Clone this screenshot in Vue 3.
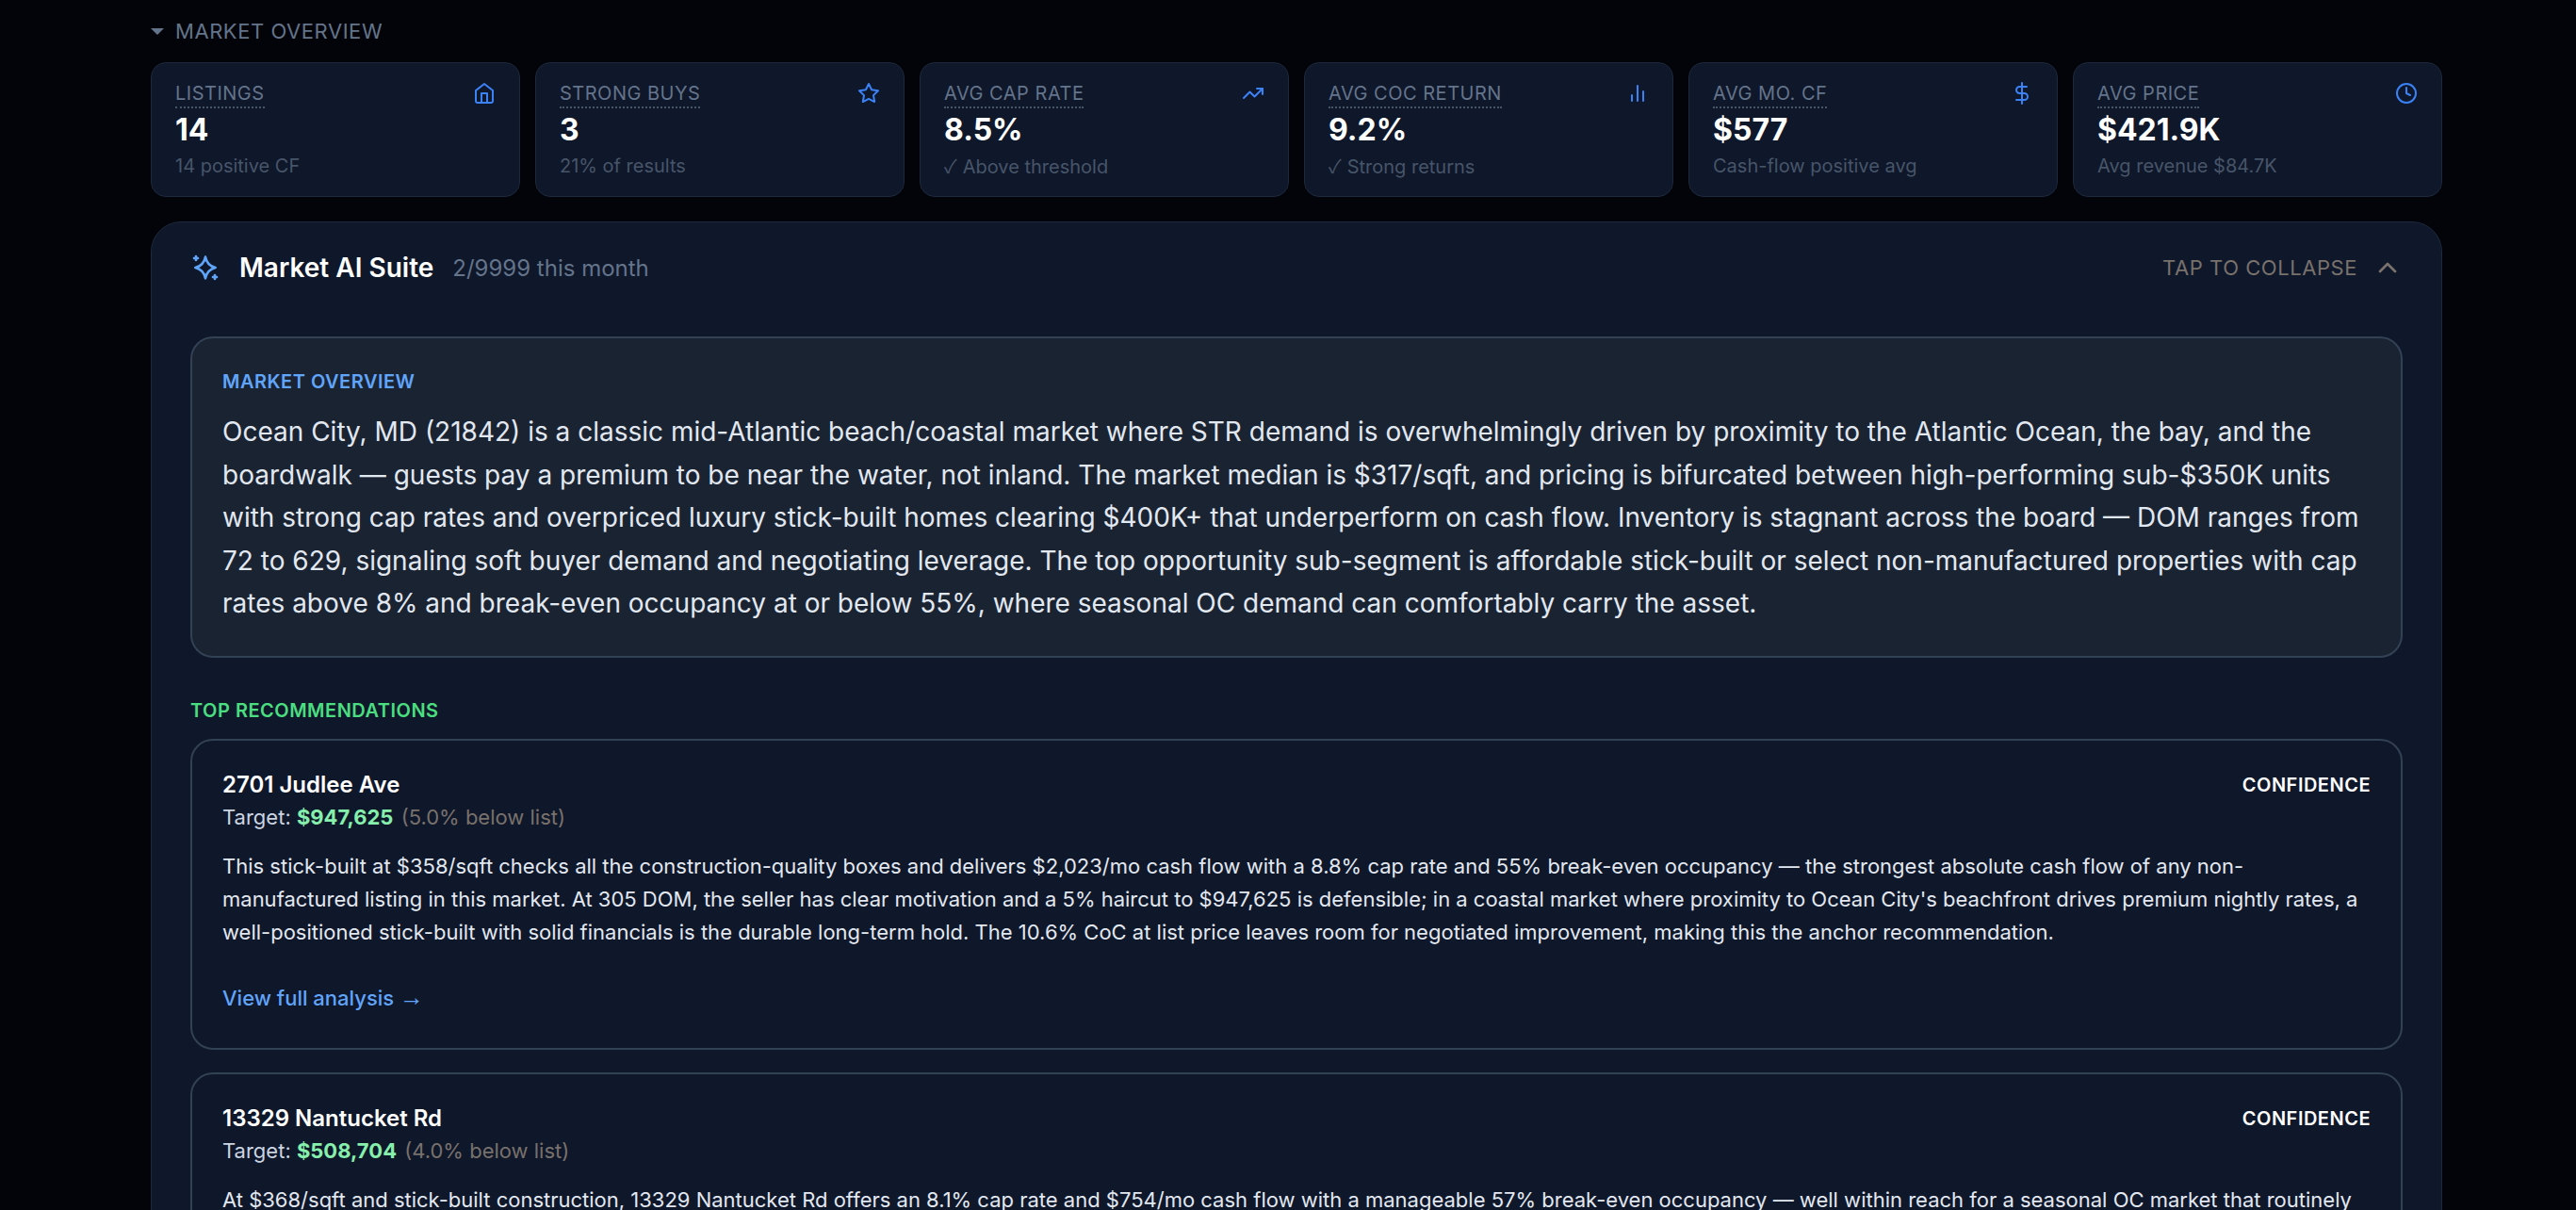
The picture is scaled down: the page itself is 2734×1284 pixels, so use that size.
<template>
  <div class="page">
    <div class="wrap">
      <div class="section-head">
        <span class="caret"></span>
        <span>MARKET OVERVIEW</span>
      </div>

      <!-- stat cards -->
      <div class="stats">
        <div v-for="s in stats" :key="s.label" class="stat">
          <div class="stat__top">
            <span class="stat__label">{{ s.label }}</span>
            <svg class="stat__icon" width="24" height="24" viewBox="0 0 24 24" fill="none" stroke="#3b82f6" stroke-width="2" stroke-linecap="round" stroke-linejoin="round">
              <path v-for="d in s.icon" :key="d" :d="d" />
            </svg>
          </div>
          <div class="stat__value">{{ s.value }}</div>
          <div class="stat__sub"><span v-if="s.check" class="stat__check">✓</span>{{ s.sub }}</div>
        </div>
      </div>

      <!-- AI panel -->
      <div class="panel">
        <div class="panel__head">
          <svg class="panel__spark" width="32" height="32" viewBox="0 0 24 24" fill="none" stroke="#60a5fa" stroke-width="2" stroke-linecap="round" stroke-linejoin="round">
            <path d="M12 3.500c.9 4.700 3.300 7.300 8 8.500-4.700 1.200-7.100 3.800-8 8.500-.9-4.700-3.300-7.300-8-8.500 4.700-1.200 7.100-3.800 8-8.500z" />
            <path d="M4.500 3v3M3 4.500h3M19.500 18v3M18 19.500h3" />
          </svg>
          <span class="panel__title">Market AI Suite</span>
          <span class="panel__usage">2/9999 this month</span>
          <span class="panel__collapse">TAP TO COLLAPSE</span>
          <svg width="32" height="32" viewBox="0 0 24 24" fill="none" stroke="#78716c" stroke-width="2" stroke-linecap="round" stroke-linejoin="round">
            <path d="M6 15l6-6 6 6" />
          </svg>
        </div>

        <div class="overview">
          <div class="overview__label">MARKET OVERVIEW</div>
          <p class="overview__text">Ocean City, MD (21842) is a classic mid-Atlantic beach/coastal market where STR demand is overwhelmingly driven by proximity to the Atlantic Ocean, the bay, and the boardwalk — guests pay a premium to be near the water, not inland. The market median is $317/sqft, and pricing is bifurcated between high-performing sub-$350K units with strong cap rates and overpriced luxury stick-built homes clearing $400K+ that underperform on cash flow. Inventory is stagnant across the board — DOM ranges from 72 to 629, signaling soft buyer demand and negotiating leverage. The top opportunity sub-segment is affordable stick-built or select non-manufactured properties with cap rates above 8% and break-even occupancy at or below 55%, where seasonal OC demand can comfortably carry the asset.</p>
        </div>

        <div class="recs-label">TOP RECOMMENDATIONS</div>

        <div v-for="r in recs" :key="r.name" class="rec">
          <div class="rec__head">
            <span class="rec__name">{{ r.name }}</span>
            <span class="rec__conf">CONFIDENCE</span>
          </div>
          <div class="rec__target">Target: <strong>{{ r.target }}</strong> <span>({{ r.below }} below list)</span></div>
          <p class="rec__text">{{ r.text }}</p>
          <a v-if="r.link" class="rec__link">View full analysis <span class="rec__arrow">→</span></a>
        </div>
      </div>
    </div>
  </div>
</template>

<script setup>
const stats = [
  { label: 'LISTINGS', value: '14', sub: '14 positive CF', icon: ['M3 9l9-7 9 7v11a2 2 0 0 1-2 2H5a2 2 0 0 1-2-2z', 'M9 22V12h6v10'] },
  { label: 'STRONG BUYS', value: '3', sub: '21% of results', icon: ['M12 2l3.090 6.260L22 9.270l-5 4.870 1.180 6.880L12 17.770l-6.180 3.250L7 14.140 2 9.270l6.910-1.010z'] },
  { label: 'AVG CAP RATE', value: '8.5%', check: true, sub: 'Above threshold', icon: ['M22 7l-8.500 8.500-5-5L2 17', 'M16 7h6v6'] },
  { label: 'AVG COC RETURN', value: '9.2%', check: true, sub: 'Strong returns', icon: ['M6 20v-6', 'M12 20V4', 'M18 20V10'] },
  { label: 'AVG MO. CF', value: '$577', sub: 'Cash-flow positive avg', icon: ['M12 1v22', 'M17 5H9.500a3.500 3.500 0 0 0 0 7h5a3.500 3.500 0 0 1 0 7H6'] },
  { label: 'AVG PRICE', value: '$421.9K', sub: 'Avg revenue $84.7K', icon: ['M12 2a10 10 0 1 0 0 20 10 10 0 0 0 0-20z', 'M12 6v6l4 2'] },
]

const recs = [
  {
    name: '2701 Judlee Ave',
    target: '$947,625',
    below: '5.0%',
    text: "This stick-built at $358/sqft checks all the construction-quality boxes and delivers $2,023/mo cash flow with a 8.8% cap rate and 55% break-even occupancy — the strongest absolute cash flow of any non-manufactured listing in this market. At 305 DOM, the seller has clear motivation and a 5% haircut to $947,625 is defensible; in a coastal market where proximity to Ocean City's beachfront drives premium nightly rates, a well-positioned stick-built with solid financials is the durable long-term hold. The 10.6% CoC at list price leaves room for negotiated improvement, making this the anchor recommendation.",
    link: true,
  },
  {
    name: '13329 Nantucket Rd',
    target: '$508,704',
    below: '4.0%',
    text: 'At $368/sqft and stick-built construction, 13329 Nantucket Rd offers an 8.1% cap rate and $754/mo cash flow with a manageable 57% break-even occupancy — well within reach for a seasonal OC market that routinely',
    link: false,
  },
]
</script>

<style>
html, body {
  margin: 0;
  background: #020409;
}
</style>

<style scoped>
.page {
  height: 1284px;
  overflow: hidden;
  background: #020409;
  font-family: Inter, "Liberation Sans", sans-serif;
  color: #fff;
}

.wrap {
  width: 2432px;
  margin-left: 160px;
}

.section-head {
  display: flex;
  align-items: center;
  gap: 12px;
  height: 66px;
  font-size: 22px;
  letter-spacing: 0.55px;
  color: #64748b;
}

.caret {
  width: 0;
  height: 0;
  border-left: 7px solid transparent;
  border-right: 7px solid transparent;
  border-top: 7px solid #64748b;
}

/* stat cards */
.stats {
  display: grid;
  grid-template-columns: repeat(6, 1fr);
  gap: 16px;
  margin-bottom: 26px;
}

.stat {
  height: 143px;
  box-sizing: border-box;
  padding: 18px 25px 18px 25px;
  background: #0f172a;
  border: 1px solid #1e293b;
  border-radius: 16px;
}

.stat__top {
  display: flex;
  justify-content: space-between;
  align-items: flex-start;
}

.stat__label {
  font-size: 20px;
  line-height: 28px;
  letter-spacing: 0.5px;
  color: #64748b;
  border-bottom: 2px dotted #475569;
}

.stat__icon {
  flex: none;
  margin-top: 2px;
}

.stat__value {
  font-size: 32px;
  font-weight: 700;
  line-height: 40px;
  margin-top: 3px;
}

.stat__sub {
  font-size: 20px;
  line-height: 28px;
  margin-top: 4px;
  color: #475569;
}

.stat__check {
  font-family: "Noto Sans CJK SC", sans-serif;
  margin-right: 6px;
}

/* panel */
.panel {
  box-sizing: border-box;
  padding: 0 41px;
  background: #0f172a;
  border: 1px solid #1e293b;
  border-radius: 32px;
}

.panel__head {
  display: flex;
  align-items: center;
  height: 96px;
  margin-bottom: 25px;
}

.panel__spark {
  margin-right: 20px;
}

.panel__title {
  font-size: 28px;
  font-weight: 600;
}

.panel__usage {
  margin-left: 20px;
  font-size: 24px;
  color: #64748b;
}

.panel__collapse {
  margin-left: auto;
  margin-right: 16px;
  font-size: 22px;
  letter-spacing: 0.55px;
  color: #78716c;
}

.overview {
  padding: 32px;
  background: #1a2332;
  border: 2px solid #334155;
  border-radius: 24px;
  margin-bottom: 42px;
}

.overview__label {
  font-size: 20px;
  line-height: 28px;
  font-weight: 600;
  letter-spacing: 0.5px;
  color: #60a5fa;
  margin-bottom: 17px;
}

.overview__text {
  margin: 0;
  font-size: 28px;
  line-height: 45.5px;
  color: #e2e8f0;
}

.recs-label {
  font-size: 20px;
  line-height: 28px;
  font-weight: 600;
  letter-spacing: 0.5px;
  color: #4ade80;
  margin-bottom: 16px;
}

.rec {
  padding: 31px 32px 37px;
  border: 2px solid #334155;
  border-radius: 24px;
  margin-bottom: 24px;
}

.rec__head {
  display: flex;
  justify-content: space-between;
  align-items: center;
}

.rec__name {
  font-size: 24px;
  font-weight: 600;
  line-height: 32px;
}

.rec__conf {
  font-size: 20px;
  font-weight: 600;
  letter-spacing: 0.5px;
}

.rec__target {
  font-size: 22px;
  line-height: 32px;
  color: #cbd5e1;
  margin-top: 2px;
}

.rec__target strong {
  font-weight: 700;
  color: #86efac;
}

.rec__target span {
  color: #78716c;
  margin-left: 2px;
}

.rec__text {
  margin: 19px 0 0;
  font-size: 22px;
  line-height: 35.2px;
  color: #e2e8f0;
}

.rec__link {
  display: block;
  margin-top: 35px;
  font-size: 22px;
  font-weight: 500;
  line-height: 32px;
  color: #60a5fa;
}

.rec__arrow {
  font-family: "Liberation Sans", sans-serif;
  font-size: 26px;
}
</style>
